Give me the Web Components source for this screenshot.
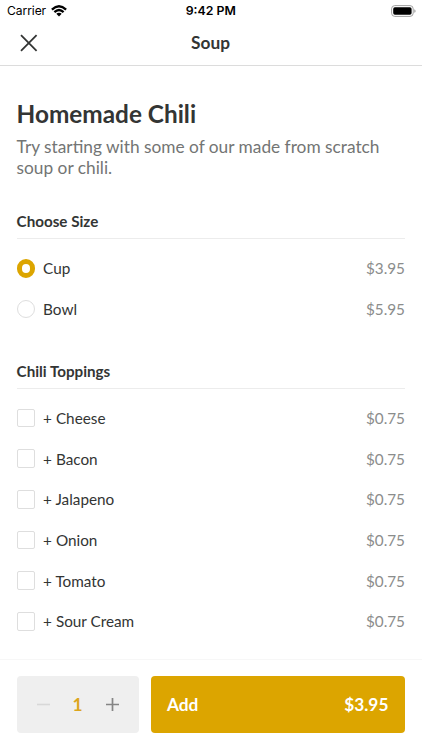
<!DOCTYPE html>
<html lang="en">
<head>
<meta charset="utf-8">
<title>Soup</title>
<style>
html,body{margin:0;height:100%;background:#fff}
body{font-family:Lato,"Open Sans",sans-serif;color:#333534;overflow:hidden}
</style>
</head>
<body>
<order-screen></order-screen>
<script>
const define=(name,html)=>customElements.define(name,class extends HTMLElement{
  constructor(){
    super();
    const t=document.createElement('template');
    t.innerHTML=html;
    this.attachShadow({mode:'open'}).append(t.content.cloneNode(true));
  }
});

define('status-bar',`<style>
:host{display:grid;grid-template-columns:1fr auto 1fr;align-items:center;height:22px;box-sizing:border-box;padding:0 6.5px 0 7px;font:12.3px/22px Inter,Roboto,sans-serif;color:#000}
.l{display:flex;align-items:center;gap:5px}
.c{font-size:12.1px;letter-spacing:-.08px}
.t{font-weight:600;font-size:12.3px;margin-right:1px}
svg{display:block}
.b{justify-self:end;margin-top:-1px}
.l svg{margin-top:-1px}
</style>
<div class="l"><span class="c">Carrier</span><svg width="16" height="12" viewBox="0 0 16 12"><g fill="none" stroke="#000" stroke-width="2.3"><path d="M.9 4.6Q8-2 15.1 4.6"/><path d="M3.4 7.2Q8 2.9 12.6 7.2"/></g><path d="M5.3 8.8Q8 6.6 10.7 8.8L8 11.4Z"/></svg></div>
<span class="t">9:42 PM</span>
<svg class="b" width="25" height="12" viewBox="0 0 25 12"><rect x=".6" y=".6" width="21.6" height="10.8" rx="3.2" fill="#fff" stroke="#a0a0a0"/><rect x="2.2" y="2.2" width="18.4" height="7.6" rx="1.7"/><path d="M23.3 4.2Q24.6 4.6 24.6 6T23.3 7.8Z" fill="#999"/></svg>`);

define('nav-bar',`<style>
:host{display:grid;grid-template-columns:1fr auto 1fr;align-items:center;height:44px;box-sizing:border-box;border-bottom:1px solid #dcdcdc;padding:0 21px 2px 20px;font-size:17.3px;font-weight:700;line-height:22px}
svg{display:block}
</style>
<svg width="18" height="18" viewBox="0 0 18 18"><path d="M1 1.2 16.6 16.8M16.6 1.2 1 16.8" stroke="#333534" stroke-width="1.8"/></svg>
<slot></slot>`);

define('item-heading',`<style>
:host{display:block}
h1{margin:0;font-size:24.35px;line-height:30px;font-weight:700}
p{margin:7.4px 0 0;font-size:17.3px;line-height:21px;color:#737574}
</style><h1><slot name="title"></slot></h1><p><slot></slot></p>`);

define('option-group',`<style>
:host{display:block}
h2{margin:0;font-size:15.2px;line-height:20px;font-weight:700;padding:1px 0 7px;border-bottom:1px solid #ececec}
div{padding-top:9px}
</style><h2><slot name="title"></slot></h2><div><slot></slot></div>`);

define('option-row',`<style>
:host{display:flex;align-items:center;height:40.7px;font-size:15.3px;line-height:20px}
i{box-sizing:border-box;width:18.5px;height:18.5px;border:1px solid #dedede;border-radius:2px;margin-right:8px;flex:none}
:host([type=radio]) i{border-radius:50%}
:host([checked]) i{border:5.2px solid #dca500}
.p{margin-left:auto;color:#8b8d8c}
</style><i></i><slot></slot><span class="p"><slot name="price"></slot></span>`);

define('quantity-stepper',`<style>
:host{display:flex;align-items:center;justify-content:space-between;width:122px;height:57px;box-sizing:border-box;padding:0 20px;background:#efefef;border-radius:4px;color:#dca51c;font-size:17.3px;font-weight:700}
svg{display:block}
</style>
<svg width="13" height="13" viewBox="0 0 13 13"><path d="M0 6.5H13" stroke="#d8d8d8" stroke-width="1.6"/></svg>
<slot></slot>
<svg width="13" height="13" viewBox="0 0 13 13"><path d="M0 6.5H13M6.5 0V13" stroke="#858585" stroke-width="1.7"/></svg>`);

define('add-button',`<style>
:host{display:flex;align-items:center;justify-content:space-between;flex:1;height:57px;box-sizing:border-box;padding:0 17px 0 16.4px;background:#dca500;border-radius:4px;color:#fff;font-size:17.3px;font-weight:700}
</style><slot></slot><slot name="price"></slot>`);

define('order-screen',`<style>
:host{display:flex;flex-direction:column;height:750px}
main{flex:1;padding:32.6px 17px 0 16.6px}
option-group{margin-top:32px}
option-group+option-group{margin-top:30.2px}
footer{display:flex;gap:12px;height:91px;box-sizing:border-box;padding:16.4px 16.6px 0;border-top:1px solid #f7f7f7}
</style>
<status-bar></status-bar>
<nav-bar>Soup</nav-bar>
<main>
<item-heading><span slot="title">Homemade Chili</span>Try starting with some of our made from scratch soup or chili.</item-heading>
<option-group><span slot="title">Choose Size</span>
<option-row type="radio" checked>Cup<span slot="price">$3.95</span></option-row>
<option-row type="radio">Bowl<span slot="price">$5.95</span></option-row></option-group>
<option-group><span slot="title">Chili Toppings</span>
${['Cheese','Bacon','Jalapeno','Onion','Tomato','Sour Cream'].map(n=>`<option-row>+ ${n}<span slot="price">$0.75</span></option-row>`).join('')}
</option-group>
</main>
<footer><quantity-stepper>1</quantity-stepper><add-button>Add<span slot="price">$3.95</span></add-button></footer>`);
</script>
</body>
</html>
